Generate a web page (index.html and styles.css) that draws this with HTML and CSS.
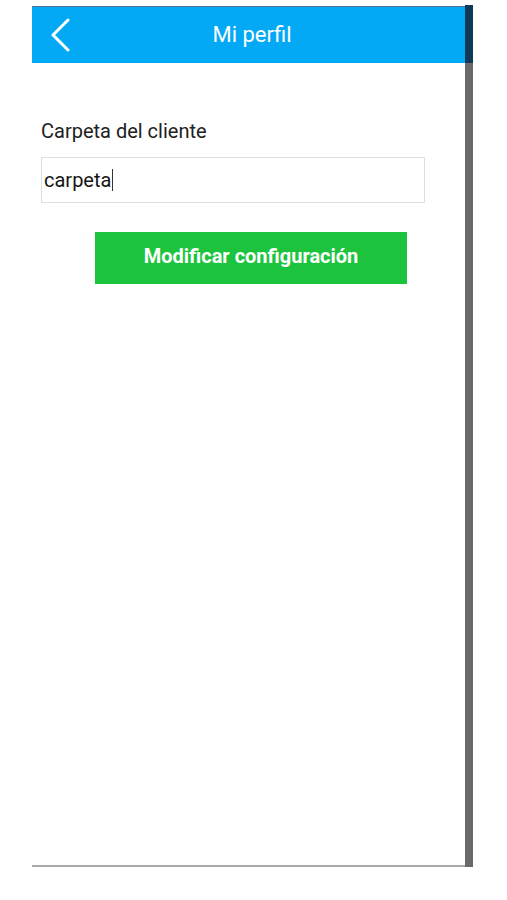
FILE: index.html
```html
<!DOCTYPE html>
<html lang="es">
<head>
<meta charset="utf-8">
<title>Mi perfil</title>
<link rel="stylesheet" href="styles.css">
</head>
<body>
<div class="frame">
  <div class="app">
    <header class="topbar">
      <svg class="back" width="22" height="34" viewBox="0 0 22 34" aria-hidden="true">
        <path d="M18 2 L3 17 L18 32" fill="none" stroke="#ffffff" stroke-width="3" stroke-linecap="round" stroke-linejoin="round"/>
      </svg>
      <h1 class="title">Mi perfil</h1>
    </header>
    <main class="content">
      <label class="label">Carpeta del cliente</label>
      <div class="field"><span class="value">carpeta</span><span class="caret"></span></div>
      <button class="submit">Modificar configuración</button>
    </main>
  </div>
  <div class="rail">
    <div class="rail-top"></div>
    <div class="rail-bottom"></div>
  </div>
</div>
</body>
</html>
```

FILE: styles.css
```css
html, body {
  margin: 0;
  padding: 0;
  background: #ffffff;
}

body {
  font-family: Roboto, "Noto Sans", "Liberation Sans", sans-serif;
}

.frame {
  display: flex;
  margin: 6px 0 0 32px;
  width: 441px;
}

.app {
  width: 433px;
  height: 859px;
  display: flex;
  flex-direction: column;
  border-bottom: 2px solid #a9a9a9;
  background: #ffffff;
}

.topbar {
  height: 56px;
  border-top: 1px solid #4f6f8c;
  background: #03a9f4;
  display: flex;
  align-items: center;
  flex-shrink: 0;
}

.back {
  margin-left: 18px;
  flex-shrink: 0;
}

.title {
  flex: 1;
  margin: 0;
  padding-right: 33px;
  text-align: center;
  font-size: 22px;
  font-weight: 400;
  color: #ffffff;
  line-height: 26px;
}

.content {
  display: flex;
  flex-direction: column;
  align-items: flex-start;
  padding: 56px 0 0 9px;
}

.label {
  font-size: 20px;
  line-height: 24px;
  color: #212121;
}

.field {
  margin-top: 14px;
  box-sizing: border-box;
  width: 384px;
  height: 46px;
  border: 1px solid #dedede;
  display: flex;
  align-items: center;
  padding-left: 2px;
}

.value {
  font-size: 20px;
  line-height: 24px;
  color: #151515;
}

.caret {
  width: 1px;
  height: 22px;
  background: #333333;
  margin-left: 1px;
}

.submit {
  margin: 29px 0 0 54px;
  width: 312px;
  height: 52px;
  border: none;
  border-radius: 0;
  background: #1cc43d;
  color: #ffffff;
  font-family: Roboto, "Noto Sans", "Liberation Sans", sans-serif;
  font-size: 20px;
  font-weight: 700;
  padding: 0 0 4px 0;
}

.rail {
  width: 8px;
  display: flex;
  flex-direction: column;
}

.rail-top {
  height: 58px;
  margin-top: -1px;
  background: #0e3a58;
}

.rail-bottom {
  flex: 1;
  background: #6a6a6a;
}
```
